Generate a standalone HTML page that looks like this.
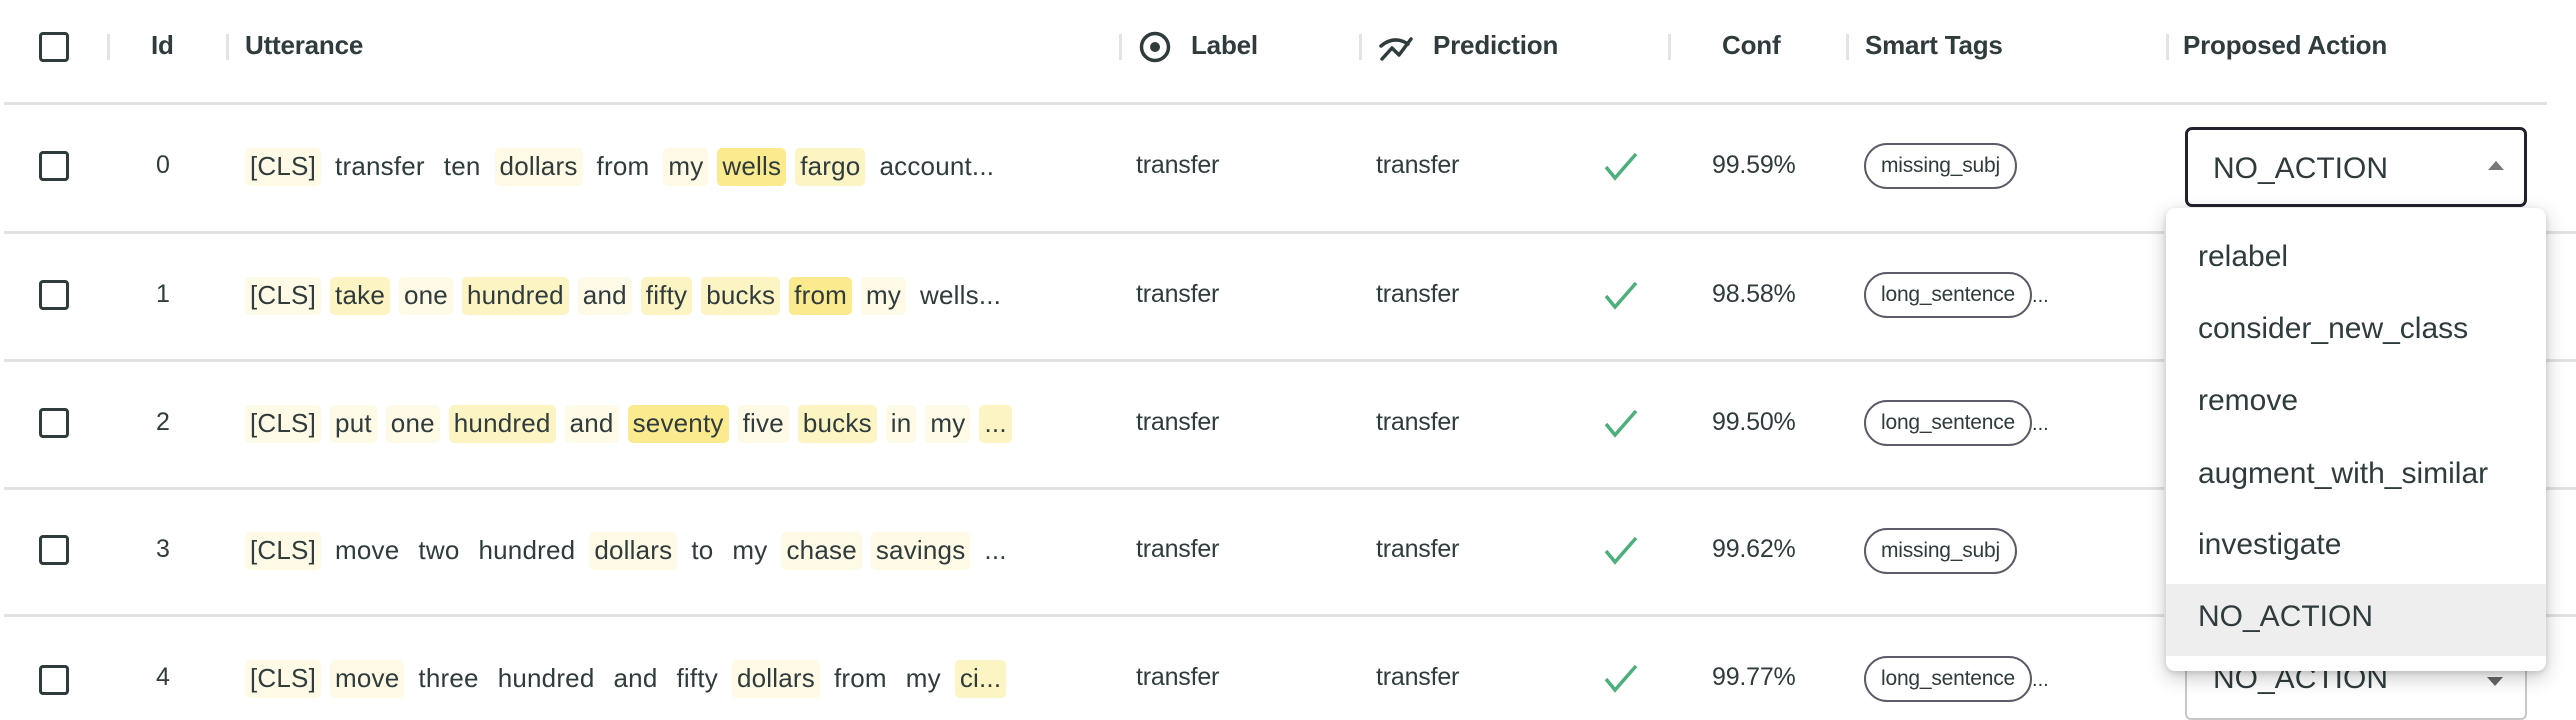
<!DOCTYPE html>
<html><head><meta charset="utf-8">
<style>
*{margin:0;padding:0;box-sizing:border-box}
body{width:2576px;height:702px;background:#fff;font-family:"Liberation Sans",sans-serif;color:#2f3b3c;position:relative;overflow:hidden}
.a{position:absolute}
.h{font-weight:bold;font-size:26px;top:30px;color:#2f3b3c;letter-spacing:-0.2px}
.sep{position:absolute;top:34px;width:3px;height:26px;background:#e3e3e3}
.line{position:absolute;left:4px;height:3px;background:#e2e2e2}
.cb{position:absolute;left:39px;width:30px;height:30px;border:3.5px solid #2f3b3c;border-radius:4px}
.t{position:absolute;font-size:25px;letter-spacing:-0.2px}
.utt{position:absolute;left:245px;width:775px;height:38px;display:flex;gap:9px;white-space:nowrap;overflow:hidden;font-size:26px;letter-spacing:0.2px}
.utt span{padding:3px 5px;border-radius:5px;line-height:30px}
.l1{background:#fefae6}.l2{background:#fdf4c4}.l3{background:#fceb8e}
.tag{position:absolute;left:1864px;display:flex;align-items:flex-end}
.pill{height:46px;border:2px solid #5c5c68;border-radius:23px;font-size:21px;line-height:42px;padding:0 15px;letter-spacing:-0.2px}
.dots{font-size:20px;padding-bottom:10px}
.chk{position:absolute;left:1603px}
</style></head><body>

<div class="cb" style="top:32px"></div>
<div class="sep" style="left:107px"></div>
<div class="a h" style="left:151px">Id</div>
<div class="sep" style="left:226px"></div>
<div class="a h" style="left:245px">Utterance</div>
<div class="sep" style="left:1119px"></div>
<svg class="a" style="left:1138px;top:30px" width="34" height="34" viewBox="0 0 34 34"><circle cx="17" cy="17" r="13.5" fill="none" stroke="#2f3b3c" stroke-width="3.5"/><circle cx="17" cy="17" r="5" fill="#2f3b3c"/></svg>
<div class="a h" style="left:1191px">Label</div>
<div class="sep" style="left:1359px"></div>
<svg class="a" style="left:1378px;top:34px" width="38" height="28" viewBox="0 0 38 28"><path d="M3 12 Q16 1 30 10" fill="none" stroke="#2f3b3c" stroke-width="3.5" stroke-linecap="round"/><path d="M4 25 L14 14 L21 21 L33 5" fill="none" stroke="#2f3b3c" stroke-width="3.5" stroke-linecap="round" stroke-linejoin="round"/></svg>
<div class="a h" style="left:1433px">Prediction</div>
<div class="sep" style="left:1668px"></div>
<div class="a h" style="left:1722px">Conf</div>
<div class="sep" style="left:1846px"></div>
<div class="a h" style="left:1865px">Smart Tags</div>
<div class="sep" style="left:2166px"></div>
<div class="a h" style="left:2183px">Proposed Action</div>

<div class="line" style="top:102px;width:2543px"></div>
<div class="line" style="top:231px;width:2160px"></div>
<div class="line" style="top:359px;width:2160px"></div>
<div class="line" style="top:487px;width:2160px"></div>
<div class="line" style="top:614px;width:2160px"></div>
<div class="line" style="top:231px;left:2546px;width:30px"></div>
<div class="line" style="top:359px;left:2546px;width:30px"></div>
<div class="line" style="top:487px;left:2546px;width:30px"></div>
<div class="line" style="top:614px;left:2546px;width:30px"></div>

<div class="cb" style="top:151px"></div>
<div class="t" style="left:156px;top:151px">0</div>
<div class="utt" style="top:148px"><span class="l1">[CLS]</span><span>transfer</span><span>ten</span><span class="l1">dollars</span><span>from</span><span class="l1">my</span><span class="l3">wells</span><span class="l2">fargo</span><span>account...</span></div>
<div class="t" style="left:1136px;top:151px">transfer</div>
<div class="t" style="left:1376px;top:151px">transfer</div>
<svg class="chk" style="top:150px" width="36" height="32" viewBox="0 0 36 32"><path d="M3 17 L12 28 L33 4" fill="none" stroke="#4caf7d" stroke-width="3.5"/></svg>
<div class="t" style="left:1712px;top:151px">99.59%</div>
<div class="tag" style="top:143px"><div class="pill">missing_subj</div></div>

<div class="cb" style="top:280px"></div>
<div class="t" style="left:156px;top:280px">1</div>
<div class="utt" style="top:277px"><span class="l1">[CLS]</span><span class="l2">take</span><span class="l1">one</span><span class="l2">hundred</span><span class="l1">and</span><span class="l2">fifty</span><span class="l2">bucks</span><span class="l3">from</span><span class="l1">my</span><span>wells...</span></div>
<div class="t" style="left:1136px;top:280px">transfer</div>
<div class="t" style="left:1376px;top:280px">transfer</div>
<svg class="chk" style="top:279px" width="36" height="32" viewBox="0 0 36 32"><path d="M3 17 L12 28 L33 4" fill="none" stroke="#4caf7d" stroke-width="3.5"/></svg>
<div class="t" style="left:1712px;top:280px">98.58%</div>
<div class="tag" style="top:272px"><div class="pill">long_sentence</div><div class="dots">...</div></div>

<div class="cb" style="top:408px"></div>
<div class="t" style="left:156px;top:408px">2</div>
<div class="utt" style="top:405px"><span class="l1">[CLS]</span><span class="l1">put</span><span class="l1">one</span><span class="l2">hundred</span><span class="l1">and</span><span class="l3">seventy</span><span class="l1">five</span><span class="l2">bucks</span><span class="l1">in</span><span class="l1">my</span><span class="l2">...</span></div>
<div class="t" style="left:1136px;top:408px">transfer</div>
<div class="t" style="left:1376px;top:408px">transfer</div>
<svg class="chk" style="top:407px" width="36" height="32" viewBox="0 0 36 32"><path d="M3 17 L12 28 L33 4" fill="none" stroke="#4caf7d" stroke-width="3.5"/></svg>
<div class="t" style="left:1712px;top:408px">99.50%</div>
<div class="tag" style="top:400px"><div class="pill">long_sentence</div><div class="dots">...</div></div>

<div class="cb" style="top:535px"></div>
<div class="t" style="left:156px;top:535px">3</div>
<div class="utt" style="top:532px"><span class="l1">[CLS]</span><span>move</span><span>two</span><span>hundred</span><span class="l1">dollars</span><span>to</span><span>my</span><span class="l1">chase</span><span class="l1">savings</span><span>...</span></div>
<div class="t" style="left:1136px;top:535px">transfer</div>
<div class="t" style="left:1376px;top:535px">transfer</div>
<svg class="chk" style="top:534px" width="36" height="32" viewBox="0 0 36 32"><path d="M3 17 L12 28 L33 4" fill="none" stroke="#4caf7d" stroke-width="3.5"/></svg>
<div class="t" style="left:1712px;top:535px">99.62%</div>
<div class="tag" style="top:528px"><div class="pill">missing_subj</div></div>

<div class="cb" style="top:665px"></div>
<div class="t" style="left:156px;top:663px">4</div>
<div class="utt" style="top:660px"><span class="l1">[CLS]</span><span class="l1">move</span><span>three</span><span>hundred</span><span>and</span><span>fifty</span><span class="l1">dollars</span><span>from</span><span>my</span><span class="l2">ci...</span></div>
<div class="t" style="left:1136px;top:663px">transfer</div>
<div class="t" style="left:1376px;top:663px">transfer</div>
<svg class="chk" style="top:662px" width="36" height="32" viewBox="0 0 36 32"><path d="M3 17 L12 28 L33 4" fill="none" stroke="#4caf7d" stroke-width="3.5"/></svg>
<div class="t" style="left:1712px;top:663px">99.77%</div>
<div class="tag" style="top:656px"><div class="pill">long_sentence</div><div class="dots">...</div></div>

<div class="a" style="left:2185px;top:640px;width:342px;height:80px;border:2px solid #c8c8c8;border-radius:6px;background:#fff">
 <div class="a" style="left:26px;top:20px;font-size:30px">NO_ACTION</div>
 <div class="a" style="left:300px;top:35px;width:0;height:0;border-left:8px solid transparent;border-right:8px solid transparent;border-top:9px solid #666"></div>
</div>

<div class="a" style="left:2185px;top:127px;width:342px;height:80px;border:3.5px solid #22222e;border-radius:7px;background:#fff">
 <div class="a" style="left:25px;top:22px;font-size:30px">NO_ACTION</div>
 <div class="a" style="left:300px;top:31px;width:0;height:0;border-left:8px solid transparent;border-right:8px solid transparent;border-bottom:9px solid #777"></div>
</div>

<div class="a" style="left:2166px;top:208px;width:380px;height:463px;background:#fff;border-radius:9px;box-shadow:0 6px 20px rgba(0,0,0,0.22),0 2px 6px rgba(0,0,0,0.12);overflow:hidden;font-size:30px">
 <div class="a" style="left:32px;top:32px">relabel</div>
 <div class="a" style="left:32px;top:104px">consider_new_class</div>
 <div class="a" style="left:32px;top:176px">remove</div>
 <div class="a" style="left:32px;top:249px">augment_with_similar</div>
 <div class="a" style="left:32px;top:320px">investigate</div>
 <div class="a" style="left:0;top:376px;width:380px;height:72px;background:#eeeeee"></div>
 <div class="a" style="left:32px;top:392px">NO_ACTION</div>
</div>
</body></html>
